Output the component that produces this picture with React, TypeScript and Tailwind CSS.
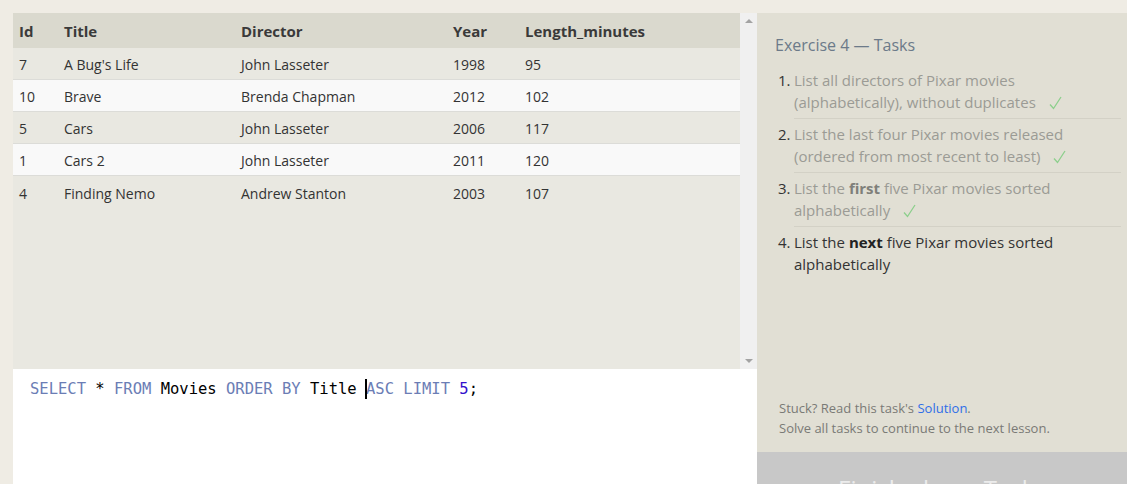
import React from "react"

type Movie = { id: number; title: string; director: string; year: number; length: number }

const movies: Movie[] = [
  { id: 7, title: "A Bug's Life", director: "John Lasseter", year: 1998, length: 95 },
  { id: 10, title: "Brave", director: "Brenda Chapman", year: 2012, length: 102 },
  { id: 5, title: "Cars", director: "John Lasseter", year: 2006, length: 117 },
  { id: 1, title: "Cars 2", director: "John Lasseter", year: 2011, length: 120 },
  { id: 4, title: "Finding Nemo", director: "Andrew Stanton", year: 2003, length: 107 },
]

const font = { fontFamily: "'Open Sans', 'Noto Sans', sans-serif" }

function Cols({ cells, className }: { cells: React.ReactNode[]; className: string }) {
  return (
    <div className={`flex items-center ${className}`}>
      <div className="w-[45px] pl-[6px]">{cells[0]}</div>
      <div className="w-[177px] pl-[6px]">{cells[1]}</div>
      <div className="w-[212px] pl-[6px]">{cells[2]}</div>
      <div className="w-[72px] pl-[6px]">{cells[3]}</div>
      <div className="flex-1 pl-[6px]">{cells[4]}</div>
    </div>
  )
}

function ResultTable() {
  return (
    <div className="flex h-[356px] bg-[#e9e8e1]">
      <div className="flex-1 text-[#333]">
        <Cols
          className="h-[35px] bg-[#dad9ce] pt-[2px] text-[15px] font-bold text-[#3a3a3a]"
          cells={["Id", "Title", "Director", "Year", "Length_minutes"]}
        />
        {movies.map((m, i) => (
          <Cols
            key={m.id}
            className={`h-[32px] pt-[2px] text-[14px] ${i < movies.length - 1 ? "border-b border-[#dcdcd8]" : ""} ${i % 2 === 1 ? "bg-[#f9f9f9]" : "bg-[#e9e8e1]"}`}
            cells={[m.id, m.title, m.director, m.year, m.length]}
          />
        ))}
      </div>
      {/* scrollbar */}
      <div className="flex w-[17px] flex-col items-center justify-between bg-[#f0f0f0] py-[6px]">
        <div className="h-0 w-0 border-x-[4px] border-b-[4px] border-x-transparent border-b-[#a3a3a3]" />
        <div className="h-0 w-0 border-x-[4px] border-t-[4px] border-x-transparent border-t-[#a3a3a3]" />
      </div>
    </div>
  )
}

function Editor() {
  const kw = "text-[#6b7db5]"
  return (
    <div className="flex-1 bg-white px-[17px] pt-[10px]">
      <div
        className="text-[15.5px] leading-[20px] whitespace-pre text-black"
        style={{ fontFamily: "'DejaVu Sans Mono', 'Liberation Mono', monospace" }}
      >
        <span className={kw}>SELECT</span> * <span className={kw}>FROM</span> Movies{" "}
        <span className={kw}>ORDER BY</span> Title{" "}
        <span className="relative">
          <span className="absolute left-[-1px] top-[-1px] h-[20px] w-[2px] bg-black" />
          <span className={kw}>ASC</span>
        </span>{" "}
        <span className={kw}>LIMIT</span> <span className="text-[#3311cc]">5</span>;
      </div>
    </div>
  )
}

const Check = () => (
  <svg className="ml-[9px] inline-block align-[-2px]" width="13" height="14" viewBox="0 0 13 14" fill="none">
    <path d="M1 8.5 L4.5 12.5 L12 1" stroke="#8ccf8c" strokeWidth="1.3" />
  </svg>
)

function Task({ n, children, done, last }: { n: number; children: React.ReactNode; done?: boolean; last?: boolean }) {
  return (
    <li className="flex">
      <span className="w-[16px] shrink-0 pt-[4px] text-[#333]">{n}.</span>
      <div className={`flex-1 pt-[4px] pb-[5px] ${last ? "" : "border-b border-[#d3d1c6]"} ${done ? "text-[#9b9b95]" : "text-[#333]"}`}>
        {children}
      </div>
    </li>
  )
}

function TaskPanel() {
  return (
    <div className="flex w-[370px] flex-col bg-[#e1dfd4]">
      <div className="flex-1 pl-[18px] pr-[6px] pt-[21px]">
        <div className="text-[16px] leading-[22px] text-[#6c7a89]">Exercise 4 — Tasks</div>
        <ol className="mt-[9px] pl-[3px] text-[15px] leading-[22px]">
          <Task n={1} done>
            List all directors of Pixar movies (alphabetically), without duplicates <Check />
          </Task>
          <Task n={2} done>
            List the last four Pixar movies released (ordered from most recent to least) <Check />
          </Task>
          <Task n={3} done>
            List the <b className="text-[#7f7f7a]">first</b> five Pixar movies sorted alphabetically <Check />
          </Task>
          <Task n={4} last>
            List the <b className="text-[#222]">next</b> five Pixar movies sorted alphabetically
          </Task>
        </ol>
      </div>
      <div className="pl-[22px] pb-[14px] text-[13px] leading-[20px] text-[#7a7a76]">
        <div>
          Stuck? Read this task's <span className="text-[#2f6ee8]">Solution</span>.
        </div>
        <div>Solve all tasks to continue to the next lesson.</div>
      </div>
      <div className="h-[52px] bg-[#c8c8c8] pt-[21px] text-center text-[24px] leading-[32px] text-[#ececec]">
        Finish above Tasks
      </div>
    </div>
  )
}

export default function App() {
  return (
    <div className="h-[484px] w-[1127px] overflow-hidden bg-[#efece4] pl-[13px] pt-[13px]" style={font}>
      <div className="flex h-[491px]">
        <div className="flex w-[744px] flex-col">
          <ResultTable />
          <Editor />
        </div>
        <TaskPanel />
      </div>
    </div>
  )
}
